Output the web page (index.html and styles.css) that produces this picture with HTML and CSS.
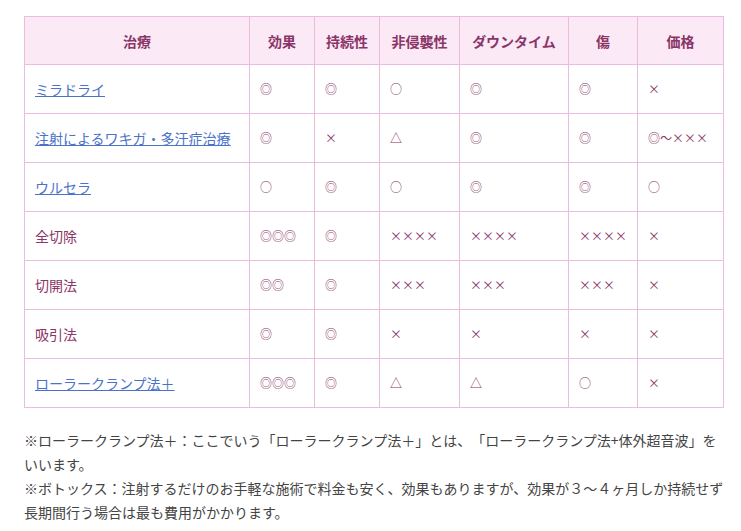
FILE: index.html
```html
<!DOCTYPE html>
<html lang="ja">
<head>
    <meta charset="UTF-8">
    <meta name="viewport" content="width=device-width, initial-scale=1.0">
    <title>治療比較</title>
    <link rel="stylesheet" href="styles.css">
</head>
<body>
    <div class="content">
        <table class="compare">
            <colgroup>
                <col class="col-name">
                <col class="col-a">
                <col class="col-b">
                <col class="col-c">
                <col class="col-d">
                <col class="col-e">
                <col class="col-f">
            </colgroup>
            <thead>
                <tr>
                    <th>治療</th>
                    <th>効果</th>
                    <th>持続性</th>
                    <th>非侵襲性</th>
                    <th>ダウンタイム</th>
                    <th>傷</th>
                    <th>価格</th>
                </tr>
            </thead>
            <tbody>
                <tr>
                    <td><a href="#">ミラドライ</a></td>
                    <td>◎</td><td>◎</td><td>○</td><td>◎</td><td>◎</td><td>×</td>
                </tr>
                <tr>
                    <td><a href="#">注射によるワキガ・多汗症治療</a></td>
                    <td>◎</td><td>×</td><td>△</td><td>◎</td><td>◎</td><td>◎～×××</td>
                </tr>
                <tr>
                    <td><a href="#">ウルセラ</a></td>
                    <td>○</td><td>◎</td><td>○</td><td>◎</td><td>◎</td><td>○</td>
                </tr>
                <tr>
                    <td>全切除</td>
                    <td>◎◎◎</td><td>◎</td><td>××××</td><td>××××</td><td>××××</td><td>×</td>
                </tr>
                <tr>
                    <td>切開法</td>
                    <td>◎◎</td><td>◎</td><td>×××</td><td>×××</td><td>×××</td><td>×</td>
                </tr>
                <tr>
                    <td>吸引法</td>
                    <td>◎</td><td>◎</td><td>×</td><td>×</td><td>×</td><td>×</td>
                </tr>
                <tr>
                    <td><a href="#">ローラークランプ法＋</a></td>
                    <td>◎◎◎</td><td>◎</td><td>△</td><td>△</td><td>○</td><td>×</td>
                </tr>
            </tbody>
        </table>

        <p class="note">※ローラークランプ法＋：ここでいう「ローラークランプ法＋」とは、「ローラークランプ法+体外超音波」をいいます。<br>※ボトックス：注射するだけのお手軽な施術で料金も安く、効果もありますが、効果が３～４ヶ月しか持続せず長期間行う場合は最も費用がかかります。</p>
    </div>
</body>
</html>
```

FILE: styles.css
```css
body {
    margin: 0;
    background-color: #fff;
    font-family: "Noto Sans CJK JP", "Noto Sans", sans-serif;
    color: #444;
    text-spacing-trim: space-all;
}

.content {
    padding: 16px 17px 0 24px;
}

.compare {
    width: 700px;
    border-collapse: collapse;
    font-size: 14px;
    table-layout: fixed;
}

.compare th,
.compare td {
    border: 1px solid #e9bde0;
    height: 48px;
    padding: 0 10px;
    line-height: 20px;
    vertical-align: middle;
}

.compare th {
    height: 47px;
    background-color: #fce9f6;
    color: #8a3567;
    font-weight: bold;
    text-align: center;
    padding: 0 4px;
}

.compare td {
    color: #8a3567;
    text-align: left;
    white-space: nowrap;
}

/* 評価記号の列 */
.compare td + td {
    font-size: 12px;
}

.compare a {
    color: #4a73c8;
    text-decoration: underline;
}

.col-name { width: 225px; }
.col-a { width: 65px; }
.col-b { width: 65px; }
.col-c { width: 80px; }
.col-d { width: 109px; }
.col-e { width: 69px; }
.col-f { width: 86px; }

.note {
    width: 700px;
    margin: 20px 0 0;
    font-size: 14px;
    line-height: 24px;
    color: #444;
}
```
